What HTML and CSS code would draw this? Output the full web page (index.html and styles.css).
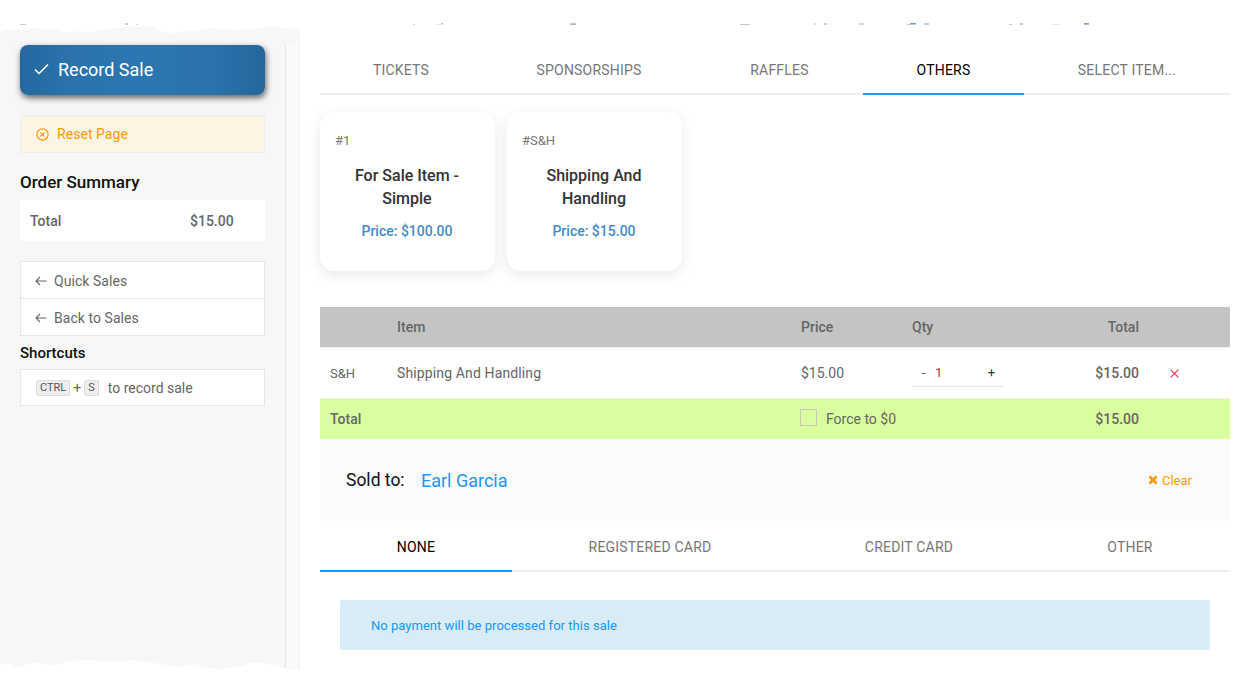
FILE: index.html
```html
<!DOCTYPE html>
<html lang="en">
<head>
<meta charset="utf-8">
<title>Record Sale</title>
<link rel="stylesheet" href="styles.css">
</head>
<body>
<svg class="torn-text" width="1250" height="3" viewBox="0 0 1250 3" aria-hidden="true">
  <rect x="20" y="1" width="6" height="1" fill="#ccc"/>
  <rect x="125" y="0" width="3" height="2" fill="#c5cdd6"/>
  <rect x="136" y="1" width="2" height="1" fill="#ddd"/>
  <rect x="413" y="1" width="2" height="1" fill="#ccc"/>
  <rect x="437" y="1" width="6" height="1" fill="#e3e3e3"/>
  <rect x="441" y="0" width="2" height="1" fill="#a9c4df"/>
  <rect x="570" y="0" width="6" height="1" fill="#a6d5f7"/>
  <rect x="570" y="1" width="6" height="1" fill="#bbb"/>
  <rect x="740" y="1" width="10" height="1" fill="#c4c4c4"/>
  <rect x="814" y="0" width="2" height="2" fill="#d0dde8"/>
  <rect x="824" y="0" width="3" height="2" fill="#bcd0e2"/>
  <rect x="859" y="0" width="5" height="2" fill="#cfdbe5"/>
  <rect x="907" y="1" width="9" height="1" fill="#c9c9c9"/>
  <rect x="910" y="0" width="6" height="1" fill="#4aa8f0"/>
  <rect x="924" y="0" width="5" height="2" fill="#b5cfe6"/>
  <rect x="1009" y="1" width="3" height="1" fill="#ccc"/>
  <rect x="1020" y="0" width="3" height="2" fill="#b5cfe6"/>
  <rect x="1053" y="1" width="6" height="1" fill="#e3e3e3"/>
  <rect x="1084" y="0" width="5" height="1" fill="#5ab0f0"/>
  <rect x="1084" y="1" width="5" height="1" fill="#bbb"/>
</svg>
<div class="page">
  <aside class="sidebar">
    <div class="side-col">
      <button class="record-btn" type="button">
        <svg class="check" width="15" height="12" viewBox="0 0 15 12" aria-hidden="true"><path d="M1 6.5 5 10.5 14 1.5" fill="none" stroke="#fff" stroke-width="1.5"/></svg>
        <span>Record Sale</span>
      </button>
      <div class="reset">
        <svg width="13" height="13" viewBox="0 0 13 13" aria-hidden="true"><circle cx="6.5" cy="6.5" r="5.6" fill="none" stroke="#ff9800" stroke-width="1.2"/><path d="M4.6 4.6 8.4 8.4M8.4 4.6 4.6 8.4" stroke="#ff9800" stroke-width="1.3"/></svg>
        <span>Reset Page</span>
      </div>
      <h2 class="summary-title">Order Summary</h2>
      <div class="summary">
        <span class="summary-label">Total</span>
        <span class="summary-value">$15.00</span>
      </div>
      <div class="links">
        <div class="link">
          <svg width="12" height="10" viewBox="0 0 12 10" aria-hidden="true"><path d="M11.5 5H1M5 1 1 5l4 4" fill="none" stroke="#666" stroke-width="1.1"/></svg>
          <span>Quick Sales</span>
        </div>
        <div class="link">
          <svg width="12" height="10" viewBox="0 0 12 10" aria-hidden="true"><path d="M11.5 5H1M5 1 1 5l4 4" fill="none" stroke="#666" stroke-width="1.1"/></svg>
          <span>Back to Sales</span>
        </div>
      </div>
      <h3 class="shortcuts-title">Shortcuts</h3>
      <div class="shortcut">
        <kbd class="key">CTRL</kbd><span class="plus">+</span><kbd class="key">S</kbd><span class="shortcut-text">to record sale</span>
      </div>
    </div>
    <div class="gutter"></div>
  </aside>
  <main class="main">
    <nav class="tabs tabs-items">
      <a class="tab">TICKETS</a>
      <a class="tab">SPONSORSHIPS</a>
      <a class="tab">RAFFLES</a>
      <a class="tab active">OTHERS</a>
      <a class="tab">SELECT ITEM...</a>
    </nav>
    <section class="cards">
      <article class="card">
        <div class="card-code">#1</div>
        <div class="card-title">For Sale Item - Simple</div>
        <div class="card-price">Price: $100.00</div>
      </article>
      <article class="card">
        <div class="card-code">#S&amp;H</div>
        <div class="card-title">Shipping And Handling</div>
        <div class="card-price">Price: $15.00</div>
      </article>
    </section>
    <div class="row row-head">
      <span></span><span>Item</span><span>Price</span><span>Qty</span><span class="right">Total</span><span></span>
    </div>
    <div class="row row-item">
      <span class="code">S&amp;H</span>
      <span class="item-name">Shipping And Handling</span>
      <span>$15.00</span>
      <span class="qty">
        <span class="qty-btn qty-minus">-</span>
        <span class="qty-val">1</span>
        <span class="qty-btn qty-plus">+</span>
      </span>
      <span class="right strong">$15.00</span>
      <svg class="remove" width="9" height="9" viewBox="0 0 9 9" aria-hidden="true"><path d="M.7.7l7.6 7.6M8.3.7.7 8.3" stroke="#f4364c" stroke-width="1.2"/></svg>
    </div>
    <div class="row row-total">
      <span class="strong">Total</span>
      <span></span>
      <span class="force"><span class="checkbox"></span><span>Force to $0</span></span>
      <span class="right strong">$15.00</span>
      <span></span>
    </div>
    <div class="sold">
      <span class="sold-label">Sold to:</span>
      <a class="sold-name">Earl Garcia</a>
      <a class="clear">
        <svg width="10" height="10" viewBox="0 0 10 10" aria-hidden="true"><path d="M1.5 1.5l7 7M8.5 1.5l-7 7" stroke="#ff9800" stroke-width="2.6"/></svg>
        <span>Clear</span>
      </a>
    </div>
    <nav class="tabs tabs-pay">
      <a class="tab active">NONE</a>
      <a class="tab">REGISTERED CARD</a>
      <a class="tab">CREDIT CARD</a>
      <a class="tab">OTHER</a>
    </nav>
    <div class="alert">No payment will be processed for this sale</div>
  </main>
</div>
</body>
</html>
```
FILE: styles.css
```css
* { box-sizing: border-box; }
html, body { margin: 0; padding: 0; }
body {
  position: relative;
  width: 1250px;
  height: 695px;
  overflow: hidden;
  background: #fff;
  font-family: Roboto, "Liberation Sans", sans-serif;
  font-size: 14px;
  color: #666;
}
.torn-text { position: absolute; left: 0; top: 23px; display: block; }
.page { display: flex; height: 695px; align-items: flex-start; }

/* Sidebar */
.sidebar {
  flex: 0 0 300px;
  height: 647px;
  margin-top: 24px;
  padding-top: 21px;
  display: flex;
  background: #f7f7f7;
  clip-path: polygon(
    0 8px, 7px 6px, 20px 6px, 30px 4px, 40px 4px, 50px 6px, 58px 6px, 65px 9px, 78px 7px, 90px 8px,
    100px 6px, 112px 5px, 125px 3px, 138px 3px, 150px 2px, 158px 6px, 170px 9px, 178px 8px, 190px 7px, 203px 6px,
    215px 4px, 228px 6px, 240px 6px, 252px 5px, 262px 4px, 270px 2px, 280px 4px, 290px 4px, 300px 7px,
    300px 646px, 285px 644px, 270px 640px, 255px 638px, 240px 642px, 220px 645px, 205px 644px, 195px 640px, 180px 643px,
    160px 640px, 135px 636px, 115px 638px, 100px 637px, 84px 636px, 70px 637px, 55px 642px, 33px 638px, 18px 644px, 10px 639px, 0 641px
  );
}
.side-col {
  flex: 0 0 286px;
  padding: 0 20px;
  border-right: 1px solid #e6e6e6;
}
.gutter {
  flex: 0 0 14px;
  background: #fafafa;
  border-right: 1px solid #efefef;
}
.record-btn {
  display: flex;
  align-items: center;
  gap: 9px;
  width: 245px;
  height: 50px;
  padding: 0 0 2px 14px;
  border: 0;
  border-radius: 8px;
  color: #fff;
  font: 400 18px Roboto, sans-serif;
  background: linear-gradient(90deg, #24689f 0%, #2a73ad 20%, #2c77b1 50%, #2a72ab 80%, #24669c 100%);
  box-shadow: 1px 3px 6px rgba(0, 0, 0, .6);
}
.reset {
  display: flex;
  align-items: center;
  gap: 8px;
  height: 38px;
  margin-top: 20px;
  padding-left: 15px;
  background: #fdf5e3;
  border: 1px solid #eee;
  color: #ff9800;
  font-size: 14px;
  letter-spacing: .05px;
}
.summary-title {
  margin: 19px 0 0;
  font-size: 17px;
  line-height: 20px;
  font-weight: 500;
  color: #111;
}
.summary {
  display: flex;
  align-items: center;
  height: 41px;
  margin-top: 8px;
  padding-left: 10px;
  background: #fff;
  color: #666;
  font-weight: 500;
}
.summary-label { width: 160px; }
.links {
  margin-top: 20px;
  background: #fff;
  border: 1px solid #e6e6e6;
}
.link {
  display: flex;
  align-items: center;
  gap: 7px;
  height: 36px;
  padding: 2px 0 0 14px;
  letter-spacing: .05px;
}
.link + .link { height: 37px; border-top: 1px solid #e6e6e6; }
.shortcuts-title {
  margin: 8px 0 0;
  font-size: 15px;
  line-height: 18px;
  font-weight: 500;
  color: #111;
}
.shortcut {
  display: flex;
  align-items: center;
  height: 37px;
  margin-top: 7px;
  padding-left: 15px;
  background: #fff;
  border: 1px solid #e6e6e6;
}
.key {
  display: block;
  height: 16px;
  padding: 0 3px;
  background: #eee;
  border: 1px solid #ddd;
  border-radius: 2px;
  font: 400 11px/14px Roboto, sans-serif;
  color: #555;
}
.plus { margin: 0 3px; }
.shortcut-text { margin-left: 9px; }

/* Main */
.main {
  flex: 0 0 910px;
  margin-left: 20px;
  padding-top: 47px;
}
.tabs { display: grid; border-bottom: 2px solid #eee; }
.tabs-items { grid-template-columns: 162px 214px 167px 161px 206px; height: 48px; }
.tabs-pay { grid-template-columns: 192px 276px 242px 200px; height: 51px; }
.tab {
  display: flex;
  align-items: center;
  justify-content: center;
  margin-bottom: -2px;
  border-bottom: 2px solid transparent;
  font-size: 14px;
  letter-spacing: .2px;
  color: #777;
}
.tab.active { color: #000; border-bottom-color: #2196f3; }
.tabs-pay .tab { padding-top: 3px; }
.tabs-items .tab { padding-bottom: 1px; }
.cards { display: flex; gap: 12px; margin-top: 17px; }
.card {
  width: 175px;
  height: 159px;
  padding: 20px 16px 0 15px;
  background: #fff;
  border-radius: 14px;
  box-shadow: 0 4px 14px rgba(0, 0, 0, .09);
  text-align: center;
}
.card-code { text-align: left; font-size: 13px; line-height: 17px; color: #777; }
.card-title {
  margin-top: 15px;
  font-size: 16px;
  line-height: 23px;
  font-weight: 500;
  color: #333;
}
.card-price {
  margin-top: 11px;
  font-size: 14px;
  line-height: 20px;
  font-weight: 500;
  color: #428bca;
}
.row {
  display: grid;
  grid-template-columns: 67px 404px 111px 110px 117px 1fr;
  align-items: center;
  padding-left: 10px;
}
.row-head { height: 40px; margin-top: 36px; background: #c4c4c4; font-weight: 500; color: #666; }
.row-item { height: 52px; border-top: 1px solid #f3f3f3; border-bottom: 1px solid #f3f3f3; }
.row-total { height: 40px; background: #d9ff9e; grid-template-columns: 470px 1px 221px 117px 1fr; }
.item-name { letter-spacing: .13px; }
.right { text-align: right; }
.strong { font-weight: 500; }
.code { font-size: 13px; }
.remove { margin-left: 31px; }
.qty { display: flex; align-items: flex-end; height: 27px; color: #555; font-size: 13px; }
.qty-btn {
  height: 26px;
  line-height: 24px;
  border-bottom: 1px solid #e2e2e2;
  text-align: center;
}
.qty-minus { width: 23px; }
.qty-plus { width: 25px; color: #333; }
.qty-val {
  width: 44px;
  height: 27px;
  line-height: 25px;
  border-bottom: 1px solid #e2e2e2;
}
.force { display: flex; align-items: center; gap: 9px; margin-left: -1px; white-space: nowrap; }
.checkbox { width: 17px; height: 17px; margin-top: -3px; border: 1px solid #c8c8b8; }
.sold {
  display: flex;
  align-items: center;
  height: 82px;
  padding: 0 38px 0 26px;
  background: #fbfbfb;
}
.sold-label { font-size: 17.5px; color: #111; width: 75px; }
.sold-name { font-size: 18px; color: #2196f3; }
.clear {
  display: flex;
  align-items: center;
  gap: 4px;
  margin-left: auto;
  font-size: 13px;
  color: #ff9800;
}
.alert {
  display: flex;
  align-items: center;
  height: 50px;
  margin: 28px 20px 0;
  padding-left: 31px;
  background: #d8ecf8;
  border-radius: 2px;
  font-size: 13px;
  letter-spacing: .03px;
  color: #2196f3;
}
```
